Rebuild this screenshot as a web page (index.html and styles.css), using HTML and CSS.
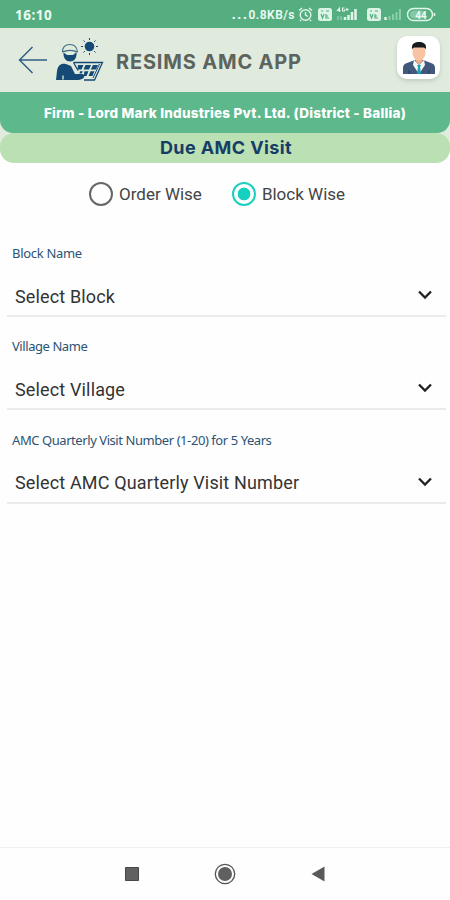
FILE: index.html
```html
<!DOCTYPE html>
<html lang="en">
<head>
<meta charset="utf-8">
<title>RESIMS AMC APP</title>
<link rel="stylesheet" href="styles.css">
</head>
<body>
<div class="status">
  <span class="time">16:10</span>
  <span class="speed"><span class="dots">...</span>0.8KB/s</span>
  <svg class="status-icons" width="142" height="28" viewBox="0 0 142 28" fill="none" stroke="#e2f6e9">
    <g stroke-width="1.4"><circle cx="10.500" cy="15" r="5.300"/><path d="M10.500 12v3l2.300 1.300M4 10.500l3-2.500M17 10.500l-3-2.500M6 20l-1 1M15 20l1 1"/></g>
    <g fill="#dcf4e5" stroke="none"><rect x="23" y="8" width="14" height="13" rx="2.500"/><rect x="72" y="8" width="14" height="13" rx="2.500"/></g>
    <g stroke="#55ae80" stroke-width="1.200"><path d="M26 11h2M31 11h3M26 14l1.500 4 1.500-4M31 14v4h3M31 16h2"/><path d="M75 11h2M80 11h3M75 14l1.500 4 1.500-4M80 14v4h3M80 16h2"/></g>
    <path d="M44.500 12V8L42.500 10.500h3M49.500 8h-2v3h2v-1.500M52 8v3M50.500 9.500h3" stroke-width="1.100"/>
    <path d="M50 20v-3M53.500 20v-5M57 20v-8M60.500 20v-11" stroke-width="2.500"/>
    <path d="M43 20v-4M46 20v-4" stroke="#8dceaa" stroke-width="1.500"/>
    <path d="M90.500 20v-3" stroke-width="2.500"/>
    <path d="M94.500 20v-4M98 20v-6M101.500 20v-8M105 20v-11" stroke="#8dceaa" stroke-width="2"/>
    <rect x="112.500" y="8.500" width="25" height="12" rx="6" stroke-width="1.500"/>
    <rect x="115" y="10.500" width="15" height="8" rx="4" fill="#84c9a3" stroke="none"/>
    <path d="M139.500 13v3" stroke-width="1.500"/>
    <text class="battery" x="126" y="18.500">44</text>
  </svg>
</div>
<header class="header">
  <svg class="back" width="30" height="30" viewBox="0 0 30 30" fill="none" stroke="#305f87" stroke-width="1.500"><path d="M29 15H1.500M14.500 2L1.500 15l13 13"/></svg>
  <svg class="logo" width="50" height="46" viewBox="0 0 50 46">
    <g fill="#164a76">
      <path d="M8.500 15h13v3c0 4.500-2.500 7.500-6.500 7.500S8.500 22 8.500 18z"/>
      <path d="M1 44l1-9c1-6 4-8 9-7l5 2 4 8h7c3 0 3 4 0 5l-3 1z"/>
      <circle cx="34.500" cy="10.500" r="4.800"/>
    </g>
    <path d="M8 16c4.500-2 9.500-2 13.500 0l-3.500 3h-6z" fill="#e0ecdd"/>
    <path d="M7.500 16c0-5 3-7.500 7.500-7.500s7 2.500 7.500 7.500M7 16c5-2 11-2 16 0" fill="none" stroke="#426c87" stroke-width="1.100"/>
    <path d="M8 43.500v-4" stroke="#e0ecdd" stroke-width="1.300"/>
    <path d="M34.500 2v2M34.500 17v2M26 10.500h2M41 10.500h2M28.500 4.500l1.400 1.400M39.100 15.100l1.400 1.400M40.500 4.500l-1.400 1.400M29.900 15.100l-1.400 1.400" stroke="#164a76" stroke-width="1"/>
    <path d="M18.500 26.500h29L39.500 44H29M18.500 26.500l4.500 8" fill="none" stroke="#164a76" stroke-width="1.300"/>
    <path d="M23 29h5.500l-2 4.500h-4zM30.500 29H36l-2 4.500h-5.500zM38 29h5l-2 4.500h-5.300zM25 35.300h2.800l-1 2.200h-2.300zM29.500 35.300h4L31.500 40h-3zM35.500 35.300h4L37.500 40h-4z" fill="#164a76"/>
    <path d="M44.500 28l-6.500 14" stroke="#164a76" stroke-width="1"/>
  </svg>
  <h1 class="title">RESIMS AMC APP</h1>
  <div class="avatar">
    <svg width="32" height="33" viewBox="0 0 32 33">
      <path d="M0 33v-6q0-4 4-5l8-3h8l8 3q4 1 4 5v6z" fill="#43597b"/>
      <path d="M11 19l5 5 5-5 1 5-6 9-6-9z" fill="#f3fafb"/>
      <path d="M12.500 16h7v4.500L16 24l-3.500-3.500z" fill="#edac88"/>
      <path d="M9.500 6h13v5c0 5-3 8.500-6.500 8.500S9.500 16 9.500 11z" fill="#f8c3a2"/>
      <path d="M9 8C8.500 3 11 1 16 1s7.500 2 7 7l-2-1.500H11z" fill="#171b20"/>
      <path d="M14 24h4l-1 2 1 7h-4l1-7z" fill="#16a3b2"/>
      <path d="M6 33v-4M26 33v-4" stroke="#273e60"/>
    </svg>
  </div>
</header>
<div class="banners">
  <div class="firm"><span>Firm - Lord Mark Industries Pvt. Ltd. (District - Ballia)</span></div>
  <h2 class="visit"><span>Due AMC Visit</span></h2>
</div>
<main>
  <div class="choices">
    <div class="choice order"><i class="radio"></i><span>Order Wise</span></div>
    <div class="choice"><i class="radio on"></i><span>Block Wise</span></div>
  </div>
  <div class="field">
    <div class="label l1">Block Name</div>
    <div class="select"><span>Select Block</span><svg width="16" height="10" viewBox="0 0 16 10"><path d="M2 1.500l6 6 6-6"/></svg></div>
  </div>
  <div class="field">
    <div class="label">Village Name</div>
    <div class="select"><span>Select Village</span><svg width="16" height="10" viewBox="0 0 16 10"><path d="M2 1.500l6 6 6-6"/></svg></div>
  </div>
  <div class="field">
    <div class="label">AMC Quarterly Visit Number (1-20) for 5 Years</div>
    <div class="select"><span>Select AMC Quarterly Visit Number</span><svg width="16" height="10" viewBox="0 0 16 10"><path d="M2 1.500l6 6 6-6"/></svg></div>
  </div>
</main>
<nav class="nav">
  <svg width="14" height="14" viewBox="0 0 14 14"><path d="M.5.500h13v13H.5z" fill="#616161" stroke="#484848"/></svg>
  <svg width="22" height="22" viewBox="0 0 22 22"><circle cx="11" cy="11" r="9.700" fill="none" stroke="#555" stroke-width="1.300"/><circle cx="11" cy="11" r="7" fill="#606060"/></svg>
  <svg width="14" height="16" viewBox="0 0 14 16"><path d="M13.500 .5v15L.5 8z" fill="#5a5a5a"/></svg>
</nav>
</body>
</html>
```
FILE: styles.css
```css
* { box-sizing: border-box; }
body {
  margin: 0;
  width: 450px;
  height: 900px;
  display: flex;
  flex-direction: column;
  background: #fefefe;
  font-family: Roboto, "Liberation Sans", sans-serif;
  overflow: hidden;
}
svg { display: block; flex: none; }
span { white-space: nowrap; }
.status {
  height: 28px;
  flex: none;
  display: flex;
  align-items: center;
  padding: 0 13px 0 15px;
  background: #55ae80;
  color: #eefbf2;
}
.time { font: 700 13.5px/28px "Noto Sans", sans-serif; padding-top: 1px; letter-spacing: .5px; }
.speed { margin-left: auto; font-size: 12px; font-weight: 600; letter-spacing: .5px; }
.dots { font-weight: 900; letter-spacing: 1.6px; font-size: 13px; }
.battery { font: 700 10px Roboto, sans-serif; fill: #eefbf2; stroke: none; text-anchor: middle; }
.header {
  height: 64px;
  flex: none;
  display: flex;
  align-items: center;
  padding: 0 10px 0 18px;
  background: #e0ebdd;
}
.logo { margin: 0 0 2px 7px; }
.title { margin: 4px 0 0 11px; color: #5c645e; font: 700 20px/28px Inter, sans-serif; letter-spacing: .82px; }
.avatar {
  width: 43px;
  height: 43px;
  margin: -5px 0 0 auto;
  border-radius: 10px;
  background: #fff;
  box-shadow: 0 2px 4px #8da08d66;
  display: flex;
  justify-content: center;
  align-items: center;
}
.banners { flex: none; background: linear-gradient(#e0ebdd 55px, #fefefe 55px); }
.firm {
  height: 41px;
  display: flex;
  align-items: center;
  justify-content: center;
  background: #5db88b;
  color: #fff;
  border-radius: 0 0 13px 13px;
  font: 800 13.5px/20px Inter, sans-serif;
  letter-spacing: .22px;
}
.visit {
  height: 30px;
  margin: 0;
  display: flex;
  align-items: center;
  justify-content: center;
  background: #bbe0b3;
  color: #173d66;
  border-radius: 14px;
  font: 700 18px/28px Inter, sans-serif;
  letter-spacing: .4px;
  padding-left: 2px;
}
main { flex: 1; }
.choices { display: flex; align-items: center; height: 62px; padding-left: 89px; color: #444; font-size: 17px; }
.choice { display: flex; align-items: center; gap: 6px; }
.choice.order { margin-right: 30px; }
.radio { width: 24px; height: 24px; flex: none; border: 2px solid #666; border-radius: 50%; }
.radio.on { border-color: #1dcfbe; background: radial-gradient(circle, #16d0bf 0 6px, transparent 6.700px); }
.field { height: 93.300px; padding: 18px 4px 0 7px; }
.label { padding-left: 5px; color: #2c5373; font: 400 13px/20px "Noto Sans", sans-serif; letter-spacing: -.43px; white-space: nowrap; }
.l1 { letter-spacing: -.3px; }
.select {
  height: 54px;
  display: flex;
  align-items: center;
  justify-content: space-between;
  padding: 14px 13px 0 8px;
  border-bottom: 2px solid #ebebeb;
  color: #333;
  font-size: 18px;
  letter-spacing: .15px;
}
.select svg { fill: none; stroke: #222; stroke-width: 2.300; margin-top: -2px; }
.nav {
  height: 53px;
  flex: none;
  display: flex;
  justify-content: space-between;
  align-items: center;
  border-top: 1px solid #f0f0f0;
  padding: 0 125px;
}
```
